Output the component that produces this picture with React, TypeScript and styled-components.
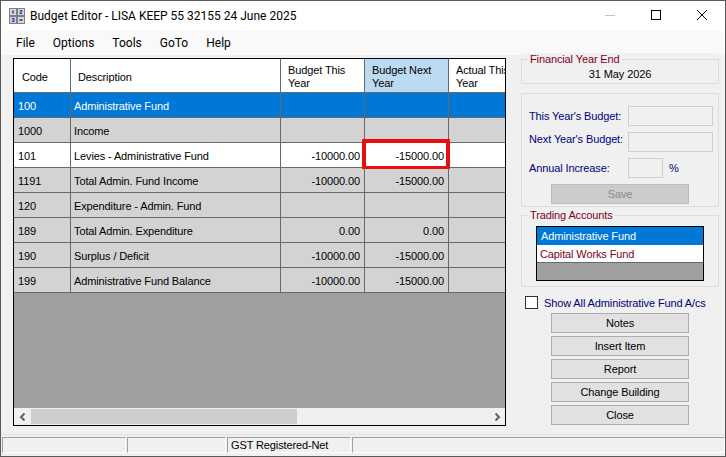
import React from "react";
import styled, { createGlobalStyle } from "styled-components";

const GlobalStyle = createGlobalStyle`
  html, body {
    margin: 0;
    padding: 0;
    width: 726px;
    height: 457px;
    overflow: hidden;
    background: #f0f0f0;
  }
  * {
    box-sizing: border-box;
  }
`;

const rows = [
  { code: "100", desc: "Administrative Fund", kind: "selected", thisYear: "", nextYear: "" },
  { code: "1000", desc: "Income", kind: "grey", thisYear: "", nextYear: "" },
  { code: "101", desc: "Levies - Administrative Fund", kind: "white", thisYear: "-10000.00", nextYear: "-15000.00", focus: true },
  { code: "1191", desc: "Total Admin. Fund Income", kind: "grey", thisYear: "-10000.00", nextYear: "-15000.00" },
  { code: "120", desc: "Expenditure - Admin. Fund", kind: "grey", thisYear: "", nextYear: "" },
  { code: "189", desc: "Total Admin. Expenditure", kind: "grey", thisYear: "0.00", nextYear: "0.00" },
  { code: "190", desc: "Surplus / Deficit", kind: "grey", thisYear: "-10000.00", nextYear: "-15000.00" },
  { code: "199", desc: "Administrative Fund Balance", kind: "grey", thisYear: "-10000.00", nextYear: "-15000.00" },
];

const actions = ["Notes", "Insert Item", "Report", "Change Building", "Close"];

export default function App() {
  return (
    <>
      <GlobalStyle />
      <Window>
        <TitleBar>
          <AppIcon viewBox="0 0 16 16">
            <rect x="0" y="0" width="16" height="16" fill="#7f7f7f" />
            <rect x="1" y="1" width="6" height="6" fill="#d8d8d8" />
            <rect x="9" y="1" width="6" height="6" fill="#d8d8d8" />
            <rect x="1" y="9" width="6" height="6" fill="#d0d0e4" />
            <rect x="9" y="9" width="6" height="6" fill="#d8d8d8" />
            <path d="M4 2.5V5.5" stroke="#2a2ab0" strokeWidth="1.4" />
            <path d="M10.8 2.5H13V4H11V5.5H13.2" fill="none" stroke="#2a2ab0" strokeWidth="0.9" />
            <path d="M2.8 10.5H5V12H3.4M5 12V13.6H2.8" fill="none" stroke="#2a2ab0" strokeWidth="0.9" />
            <path d="M10.5 12H13.5" stroke="#2a2ab0" strokeWidth="1.6" />
          </AppIcon>
          <TitleText>Budget Editor - LISA KEEP 55 32155 24 June 2025</TitleText>
          <WindowButtons>
            <WindowButton>
              <svg width="10" height="10" viewBox="0 0 10 10">
                <path d="M0 5.5H10" stroke="#c4c4c4" strokeWidth="1" />
              </svg>
            </WindowButton>
            <WindowButton>
              <svg width="10" height="10" viewBox="0 0 10 10">
                <rect x="0.5" y="0.5" width="9" height="9" fill="none" stroke="#000" strokeWidth="1" />
              </svg>
            </WindowButton>
            <WindowButton>
              <svg width="10" height="10" viewBox="0 0 10 10">
                <path d="M0 0L10 10M10 0L0 10" stroke="#000" strokeWidth="1" />
              </svg>
            </WindowButton>
          </WindowButtons>
        </TitleBar>
        <MenuBar>
          {["File", "Options", "Tools", "GoTo", "Help"].map((item) => (
            <MenuItem key={item}>{item}</MenuItem>
          ))}
        </MenuBar>
        <Body>
          <GridFrame>
            <GridHeader>
              <HeaderCell $w={57} $first>Code</HeaderCell>
              <HeaderCell $w={210}>Description</HeaderCell>
              <HeaderCell $w={84} $top>Budget This Year</HeaderCell>
              <HeaderCell $w={84} $top $active>Budget Next Year</HeaderCell>
              <HeaderCell $w={56} $top $last>
                <HeaderClip>Actual This Year</HeaderClip>
              </HeaderCell>
            </GridHeader>
            {rows.map((row) => (
              <GridRow key={row.code} $kind={row.kind}>
                <Cell $w={57} $first>{row.code}</Cell>
                <Cell $w={210}>{row.desc}</Cell>
                <NumCell $w={84}>{row.thisYear}</NumCell>
                <NumCell $w={84}>
                  {row.nextYear}
                  {row.focus && <FocusBox />}
                </NumCell>
                <Cell $w={56} $last />
              </GridRow>
            ))}
            <GridEmpty />
            <ScrollBar>
              <ScrollArrow>
                <svg width="8" height="8" viewBox="0 0 8 8">
                  <path d="M5.5 0.5L2 4L5.5 7.5" fill="none" stroke="#606060" strokeWidth="2" />
                </svg>
              </ScrollArrow>
              <ScrollTrack>
                <ScrollThumb />
              </ScrollTrack>
              <ScrollArrow>
                <svg width="8" height="8" viewBox="0 0 8 8">
                  <path d="M2.5 0.5L6 4L2.5 7.5" fill="none" stroke="#606060" strokeWidth="2" />
                </svg>
              </ScrollArrow>
            </ScrollBar>
          </GridFrame>
          <SidePanel>
            <YearEndGroup>
              <GroupLegend>Financial Year End</GroupLegend>
              <YearEndValue>31 May 2026</YearEndValue>
            </YearEndGroup>
            <BudgetGroup>
              <FieldRow>
                <FieldLabel>This Year's Budget:</FieldLabel>
                <FieldBox $w={85} />
              </FieldRow>
              <FieldRow>
                <FieldLabel $raised>Next Year's Budget:</FieldLabel>
                <FieldBox $w={85} />
              </FieldRow>
              <FieldRow>
                <FieldLabel>Annual Increase:</FieldLabel>
                <FieldBox $w={35} />
                <Percent>%</Percent>
              </FieldRow>
              <SaveButton disabled>Save</SaveButton>
            </BudgetGroup>
            <TradingGroup>
              <GroupLegend>Trading Accounts</GroupLegend>
              <AccountList>
                <AccountItem $selected>Administrative Fund</AccountItem>
                <AccountItem>Capital Works Fund</AccountItem>
                <AccountEmpty />
              </AccountList>
            </TradingGroup>
            <CheckRow>
              <CheckBox />
              <CheckLabel>Show All Administrative Fund A/cs</CheckLabel>
            </CheckRow>
            <ButtonStack>
              {actions.map((a) => (
                <ActionButton key={a}>{a}</ActionButton>
              ))}
            </ButtonStack>
          </SidePanel>
        </Body>
        <StatusBar>
          <StatusPanel $w={124} />
          <StatusPanel $w={99} />
          <StatusPanel $w={124}>GST Registered-Net</StatusPanel>
          <StatusPanel $w={373} />
        </StatusBar>
      </Window>
    </>
  );
}

const Window = styled.div`
  width: 726px;
  height: 457px;
  display: flex;
  flex-direction: column;
  background: #f0f0f0;
  border: 1px solid #5a5a5a;
  font-family: "Liberation Sans", Arial, sans-serif;
  font-size: 11px;
  letter-spacing: -0.12px;
  color: #000;
`;

const TitleBar = styled.div`
  height: 30px;
  flex: none;
  display: flex;
  align-items: center;
  background: #fff;
  padding-left: 8px;
`;

const AppIcon = styled.svg`
  width: 16px;
  height: 16px;
  flex: none;
`;

const TitleText = styled.div`
  margin-left: 5px;
  flex: 1;
  font-family: Roboto, "Liberation Sans", sans-serif;
  font-size: 12px;
  letter-spacing: 0;
`;

const WindowButtons = styled.div`
  display: flex;
`;

const WindowButton = styled.div`
  width: 46px;
  height: 30px;
  padding-bottom: 2px;
  display: flex;
  align-items: center;
  justify-content: center;
`;

const MenuBar = styled.div`
  height: 24px;
  flex: none;
  display: flex;
  align-items: center;
  background: #f9f9f9;
  padding-left: 15px;
  gap: 18px;
  font-family: Roboto, "Liberation Sans", sans-serif;
  font-size: 12px;
  letter-spacing: 0;
`;

const MenuItem = styled.span``;

const Body = styled.div`
  flex: 1;
  display: flex;
  align-items: flex-start;
  padding-left: 12px;
  min-height: 0;
`;

const GridFrame = styled.div`
  width: 493px;
  height: 368px;
  margin-top: 3px;
  flex: none;
  display: flex;
  flex-direction: column;
  border: 1px solid #000;
  background: #a0a0a0;
`;

const GridHeader = styled.div`
  height: 34px;
  flex: none;
  display: flex;
  background: #fff;
  border-bottom: 1px solid #696969;
`;

const HeaderCell = styled.div<{ $w: number; $top?: boolean; $active?: boolean; $last?: boolean; $first?: boolean }>`
  width: ${(p) => p.$w}px;
  flex: none;
  display: flex;
  align-items: ${(p) => (p.$top ? "flex-start" : "center")};
  padding: ${(p) => (p.$top ? "5px 6px 0 7px" : `3px 6px 0 ${p.$first ? 8 : 7}px`)};
  line-height: 13px;
  background: ${(p) => (p.$active ? "#bcdaf1" : "#fff")};
  border-right: ${(p) => (p.$last ? "none" : "1px solid #696969")};
  overflow: hidden;
`;

const HeaderClip = styled.div`
  width: 60px;
  flex: none;
`;

const GridRow = styled.div<{ $kind: string }>`
  height: 25px;
  flex: none;
  display: flex;
  border-bottom: 1px solid #696969;
  background: ${(p) =>
    p.$kind === "selected" ? "#0078d7" : p.$kind === "white" ? "#fff" : "#d3d3d3"};
  color: ${(p) => (p.$kind === "selected" ? "#fff" : "#000")};
`;

const Cell = styled.div<{ $w: number; $last?: boolean; $first?: boolean }>`
  width: ${(p) => p.$w}px;
  flex: none;
  display: flex;
  align-items: center;
  padding: 1px 0 0 ${(p) => (p.$first ? 4 : 3)}px;
  border-right: ${(p) => (p.$last ? "none" : "1px solid #696969")};
  white-space: nowrap;
`;

const NumCell = styled(Cell)`
  position: relative;
  justify-content: flex-end;
  padding: 1px 4px 0 0;
`;

const FocusBox = styled.div`
  position: absolute;
  left: -3px;
  top: -4px;
  right: -2px;
  bottom: -2px;
  border-style: solid;
  border-width: 4px 4px 3px 4px;
  border-color: #e60e0e;
`;

const GridEmpty = styled.div`
  flex: 1;
`;

const ScrollBar = styled.div`
  height: 17px;
  flex: none;
  display: flex;
  background: #f0f0f0;
`;

const ScrollArrow = styled.div`
  width: 17px;
  flex: none;
  display: flex;
  align-items: center;
  justify-content: center;
`;

const ScrollTrack = styled.div`
  flex: 1;
  padding-top: 1px;
`;

const ScrollThumb = styled.div`
  width: 266px;
  height: 15px;
  background: #cdcdcd;
`;

const SidePanel = styled.div`
  width: 198px;
  flex: none;
  display: flex;
  flex-direction: column;
  margin: -2px 0 0 15px;
  background: #f0f0f0;
`;

const Group = styled.div`
  position: relative;
  width: 198px;
  border: 1px solid #dcdcdc;
`;

const GroupLegend = styled.div`
  position: absolute;
  left: 6px;
  top: -7px;
  padding: 0 2px;
  background: #f0f0f0;
  color: #800020;
  line-height: 13px;
`;

const YearEndGroup = styled(Group)`
  height: 25px;
  margin-top: 6px;
`;

const YearEndValue = styled.div`
  text-align: center;
  padding-top: 8px;
  line-height: 13px;
`;

const BudgetGroup = styled(Group)`
  height: 114px;
  margin-top: 9px;
  padding: 12px 7px 0 7px;
  display: flex;
  flex-direction: column;
  gap: 6px;
`;

const FieldRow = styled.div`
  display: flex;
  align-items: center;
  height: 20px;
`;

const FieldLabel = styled.span<{ $raised?: boolean }>`
  width: 99px;
  flex: none;
  margin-bottom: ${(p) => (p.$raised ? 7 : 0)}px;
  color: #000080;
  white-space: nowrap;
`;

const FieldBox = styled.div<{ $w: number }>`
  width: ${(p) => p.$w}px;
  height: 20px;
  flex: none;
  background: #f0f0f0;
  border: 1px solid #cfcfcf;
`;

const Percent = styled.span`
  margin-left: 6px;
  color: #000080;
`;

const SaveButton = styled.button`
  display: block;
  width: 138px;
  height: 20px;
  margin: 0 0 0 22px;
  padding: 0;
  background: #cccccc;
  border: 1px solid #bcbcbc;
  color: #8a8a8a;
  font: inherit;
  letter-spacing: inherit;
`;

const TradingGroup = styled(Group)`
  height: 72px;
  margin-top: 8px;
  padding: 10px 0 0 14px;
`;

const AccountList = styled.div`
  width: 168px;
  height: 55px;
  display: flex;
  flex-direction: column;
  border: 1px solid #000;
  background: #a0a0a0;
`;

const AccountItem = styled.div<{ $selected?: boolean }>`
  height: 18px;
  flex: none;
  display: flex;
  align-items: center;
  padding-left: ${(p) => (p.$selected ? 4 : 3)}px;
  background: ${(p) => (p.$selected ? "#0078d7" : "#fff")};
  color: ${(p) => (p.$selected ? "#fff" : "#800020")};
  border-bottom: 1px solid ${(p) => (p.$selected ? "#0078d7" : "#696969")};
`;

const AccountEmpty = styled.div`
  flex: 1;
`;

const CheckRow = styled.div`
  display: flex;
  align-items: center;
  height: 13px;
  margin-top: 9px;
  padding-left: 4px;
`;

const CheckBox = styled.div`
  width: 13px;
  height: 13px;
  flex: none;
  background: #fff;
  border: 1px solid #333;
`;

const CheckLabel = styled.span`
  margin-left: 6px;
  color: #000080;
  white-space: nowrap;
`;

const ButtonStack = styled.div`
  display: flex;
  flex-direction: column;
  gap: 3px;
  margin: 4px 0 0 30px;
`;

const ActionButton = styled.button`
  width: 138px;
  height: 20px;
  padding: 0;
  background: #e1e1e1;
  border: 1px solid #adadad;
  color: #000;
  font: inherit;
  letter-spacing: inherit;
`;

const StatusBar = styled.div`
  height: 22px;
  flex: none;
  display: flex;
  align-items: flex-start;
  padding: 2px 0 0 1px;
  gap: 1px;
  border-top: 1px solid #e2e2e2;
`;

const StatusPanel = styled.div<{ $w: number }>`
  width: ${(p) => p.$w}px;
  height: 16px;
  flex: none;
  display: flex;
  align-items: center;
  padding-left: 3px;
  border: 1px solid #a0a0a0;
  border-right-color: #fff;
  border-bottom-color: #fff;
  white-space: nowrap;
`;
